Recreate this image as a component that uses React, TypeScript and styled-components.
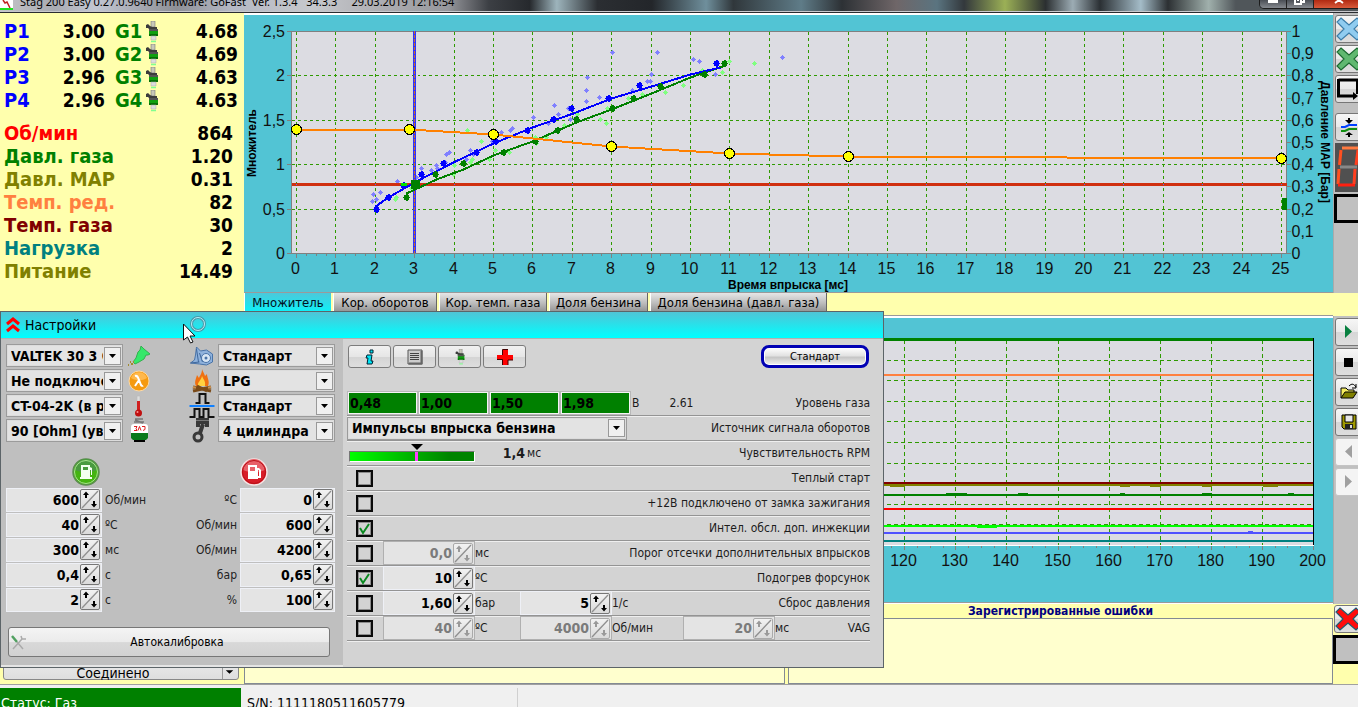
import React, { useLayoutEffect, useRef, useState } from "react";
import styled, { createGlobalStyle, css } from "styled-components";

const UI = `"DejaVu Sans Condensed", "DejaVu Sans", "Noto Sans", sans-serif`;
const ARIAL = `"Liberation Sans", Arial, sans-serif`;

const Global = createGlobalStyle`
  * { box-sizing: border-box; }
  body { margin: 0; background: #ffffad; font-family: ${UI}; font-size: 12px; color: #000; }
  button, input, select { font-family: inherit; margin: 0; }
`;

/* ---------- page frame ---------- */

const Page = styled.div`
  position: relative;
  display: flex;
  flex-direction: column;
  height: 100vh;
  overflow: hidden;
  background: #ffffad;
`;

const TitleBar = styled.header`
  display: flex;
  align-items: flex-start;
  height: 13px;
  flex: none;
  overflow: hidden;
  border-bottom: 1px solid #2a2c30;
  box-shadow: inset 0 -1px #c8c8cc;
  background: linear-gradient(90deg, #c4c4c8 0, #a9abb2 4%, #c2c6d2 7%, #8e9096 13%, #b4b8c4 17%, #c6c8cc 23%, #a9a9ae 29%, #96979c 33%, #3c3f44 36%, #26292d 39%, #9db4bc 41%, #2b2e32 44%, #23262a 48%, #6f8f9c 52%, #30373b 54%, #5f7c88 59%, #2d3135 62%, #6f6668 66%, #5a7480 69%, #33383c 71%, #9bb056 74%, #2b2f31 77%, #9cacb4 79%, #2b3034 81%, #a4bcc8 84%, #2c3033 86%, #a0b0ac 89%, #50565a 91%);
`;

const AppIcon = styled.svg`
  flex: none;
`;

const TitleText = styled.h1`
  margin: -6px 0 0 5px;
  font: 400 11px/16px "Noto Sans", sans-serif;
  white-space: pre;
`;

const WindowButtons = styled.div`
  display: flex;
  margin-left: auto;
  margin-right: -8px;
  height: 9px;
  flex: none;
  border: 1px solid #1c1c1c;
  border-top: 0;
  border-radius: 0 0 5px 5px;
  overflow: hidden;
`;

const WindowButton = styled.button<{ $close?: boolean }>`
  width: ${(p) => (p.$close ? 51 : 27)}px;
  padding: 0;
  border: 0;
  border-right: 1px solid #222;
  display: flex;
  justify-content: center;
  background: ${(p) => (p.$close ? "linear-gradient(#b12a12, #d8593a)" : "linear-gradient(#4a4e55, #85898f)")};
`;

const Main = styled.main`
  display: grid;
  grid-template-columns: 244px minmax(0, 1fr) 25px;
  grid-template-rows: 591px 80px;
  flex: none;
`;

const Readings = styled.section`
  padding: 7px 6px 0 4px;
`;

const Center = styled.section`
  display: flex;
  flex-direction: column;
`;

const ChartPanel = styled.div<{ $second?: boolean }>`
  border-top: 2px solid #fff;
  border-bottom: 1px solid #9a9a9a;
  background: #52c4d4;
  height: ${(p) => (p.$second ? 287 : 280)}px;
  flex: none;
  ${(p) => p.$second && css`box-shadow: 0 -1px #999, 0 1px #fff;`}
`;

const ChartSvg = styled.svg`
  display: block;
  width: 100%;
  font-family: ${ARIAL};
  shape-rendering: crispEdges;
`;

/* ---------- readings ---------- */

const ReadTable = styled.table<{ $gap?: boolean }>`
  width: 100%;
  border-collapse: collapse;
  margin-top: ${(p) => (p.$gap ? 10 : 0)}px;
  font: 700 20px/23px ${UI};
  td, th { padding: 0; height: 23px; }
`;

const Name = styled.th<{ $c: string; $w?: number; $start?: number }>`
  color: ${(p) => p.$c};
  text-align: left;
  font-weight: 700;
  ${(p) => p.$w && css`width: ${p.$w}px;`}
  && { padding-left: ${(p) => p.$start ?? 0}px; }
`;

const Value = styled.td<{ $w?: number; $end?: number }>`
  text-align: right;
  font-size: 19px;
  ${(p) => p.$w && css`width: ${p.$w}px;`}
  && { padding-right: ${(p) => p.$end ?? 0}px; }
`;

const IconCell = styled.td`
  width: 18px;
  svg { display: block; }
`;

/* ---------- tabs ---------- */

const Tabs = styled.div`
  display: flex;
  gap: 2px;
  height: 18px;
  margin-bottom: 5px;
  flex: none;
`;

const Tab = styled.button<{ $active?: boolean; $w: number }>`
  width: ${(p) => p.$w}px;
  height: 20px;
  padding: 0;
  border: 0;
  border-right: ${(p) => (p.$active ? "0" : "1px solid #666")};
  border-left: 1px solid #fff;
  color: ${(p) => (p.$active ? "#012" : "#000")};
  font: 13px/20px ${UI};
  white-space: nowrap;
  background: ${(p) => (p.$active ? "linear-gradient(#4cc8da, #08f4fa)" : "linear-gradient(#e6e6e6, #bdbdbd 50%, #8c8c8c)")};
`;

/* ---------- side tools ---------- */

const Side = styled.aside`
  display: flex;
  flex-direction: column;
  justify-content: space-between;
  overflow: hidden;
`;

const ToolGroup = styled.div<{ $h: number }>`
  display: flex;
  flex-direction: column;
  gap: 2px;
  height: ${(p) => p.$h}px;
  flex: none;
  padding: 2px 0 0 1px;
  border-left: 1px solid #aaa;
  background: #c0c0c0;
`;

const ErrorTools = styled.div`
  display: flex;
  flex-direction: column;
  gap: 2px;
  padding: 1px 0 0 1px;
`;

const ToolButton = styled.button<{ $off?: boolean; $gap?: boolean }>`
  display: flex;
  align-items: center;
  width: 28px;
  height: 28px;
  flex: none;
  margin-top: ${(p) => (p.$gap ? 8 : 0)}px;
  padding: 0;
  border: 1px solid ${(p) => (p.$off ? "#c4c4c4" : "#777")};
  border-radius: 3px;
  background: ${(p) => (p.$off ? "#f4f4f4" : "linear-gradient(#f6f6f6, #e9e9e9 50%, #d6d6d6 51%, #dedede)")};
  svg { display: block; flex: none; }
`;

const Segment = styled.svg`
  flex: none;
  display: block;
`;

const BlackBox = styled.div`
  width: 30px;
  height: 29px;
  margin-left: -1px;
  flex: none;
  border: 3px solid #000;
  background: #c0c0c0;
`;

/* ---------- bottom strip ---------- */

const Bottom = styled.div`
  display: grid;
  grid-template-columns: minmax(0, 541fr) minmax(0, 545fr);
  gap: 3px;
  grid-column: 2;
`;

const ErrorBlock = styled.section`
  display: flex;
  flex-direction: column;
`;

const ErrorTitle = styled.h2`
  margin: 0;
  height: 14px;
  font: 700 12px/15px ${UI};
  text-align: center;
  color: #000080;
`;

const ErrorBox = styled.div`
  flex: 1;
  border: 1px solid #838a93;
  background: #ffffce;
`;

const ConnectWrap = styled.div`
  display: flex;
  align-items: flex-end;
  padding: 0 5px 4px 3px;
`;

const Connect = styled.button`
  display: flex;
  align-items: flex-end;
  width: 100%;
  height: 26px;
  padding: 0 2px 0 0;
  border: 1px solid #888;
  border-radius: 3px;
  background: linear-gradient(#eee, #dedede);
  font: 14px/12px ${UI};
  span { flex: 1; }
  svg { border-left: 1px solid #999; }
`;

const StatusBar = styled.footer`
  display: flex;
  flex: 1;
  min-height: 23px;
  overflow: hidden;
  border-top: 1px solid #a0a0a0;
  background: #f0f0f0;
  font: 14px/18px ${UI};
`;

const StatusCell = styled.div<{ $green?: boolean }>`
  width: ${(p) => (p.$green ? 241 : 277)}px;
  flex: none;
  margin-top: 3px;
  padding: ${(p) => (p.$green ? "6px 0 0 1px" : "6px 0 0 6px")};
  white-space: nowrap;
  color: ${(p) => (p.$green ? "#fff" : "#000")};
  background: ${(p) => (p.$green ? "#008000" : "transparent")};
  border-right: ${(p) => (p.$green ? "0" : "1px solid #d0d0d0")};
`;

/* ---------- settings window ---------- */

const Dialog = styled.section`
  position: absolute;
  left: 0;
  top: 311px;
  width: 884px;
  border: 1px solid #5c6468;
  background: #d3d3d3;
`;

const DialogTitle = styled.h2`
  display: flex;
  align-items: center;
  gap: 5px;
  height: 27px;
  margin: 0;
  padding-left: 5px;
  font: 400 14px/18px ${UI};
  border-bottom: 1px solid #b0b0b0;
  background: linear-gradient(#50c4d6, #00ffff);
`;

const Body = styled.div`
  display: flex;
`;

const LeftPane = styled.div`
  width: 342px;
  flex: none;
  padding: 5px 8px 8px 5px;
  background: #bfbfbf;
  border-bottom: 2px solid #e4e4e4;
`;

const Cols = styled.div`
  display: flex;
  justify-content: space-between;
`;

const Stack = styled.div`
  display: flex;
  flex-direction: column;
  gap: 2px;
`;

const ComboRow = styled.div`
  display: flex;
  gap: 3px;
  align-items: center;
  height: 23px;
  > svg { flex: none; width: 26px; overflow: visible; }
`;

const ComboWrap = styled.span<{ $w: number }>`
  display: grid;
  width: ${(p) => p.$w}px;
  height: 23px;
  border: 1px solid #9b9b9b;
  outline: 1px solid #dcdcdc;
  outline-offset: -2px;
  background: #e3e3e3;
`;

const Select = styled.select`
  grid-area: 1 / 1;
  appearance: none;
  width: 100%;
  min-width: 0;
  padding: 0 19px 0 4px;
  border: 0;
  background: transparent;
  color: #000;
  font: 700 14px/18px ${UI};
  overflow: hidden;
`;

const ArrowBox = styled.span`
  grid-area: 1 / 1;
  justify-self: end;
  align-self: center;
  display: flex;
  align-items: center;
  justify-content: center;
  width: 17px;
  height: 18px;
  margin-right: 1px;
  border: 1px solid #999;
  background: #f0f0f0;
  pointer-events: none;
`;

const Pumps = styled.div`
  display: flex;
  justify-content: space-between;
  padding: 16px 67px 2px 66px;
  svg { display: block; }
`;

const FieldRow = styled.label<{ $rev?: boolean }>`
  display: flex;
  flex-direction: ${(p) => (p.$rev ? "row-reverse" : "row")};
  align-items: center;
  gap: 3px;
  height: 23px;
  font-size: 12px;
  color: #222;
`;

const SpinWrap = styled.span<{ $w: number; $off?: boolean }>`
  display: flex;
  align-items: center;
  width: ${(p) => p.$w}px;
  height: 24px;
  flex: none;
  border: 1px solid ${(p) => (p.$off ? "#b0b0b0" : "#eef0f6")};
  background: #e4e4e4;
`;

const SpinInput = styled.input`
  flex: 1;
  min-width: 0;
  width: 0;
  height: 20px;
  padding: 0 1px 0 0;
  border: 0;
  background: transparent;
  text-align: right;
  color: #000;
  font: 700 14px/20px ${UI};
  &:disabled { color: #7b7b7b; }
`;

const SpinButton = styled.button`
  width: 20px;
  height: 21px;
  flex: none;
  margin-right: 1px;
  padding: 0;
  border: 1px solid #777;
  border-radius: 2px;
  background: linear-gradient(#f2f2f2, #dadada);
  color: #000;
  svg { display: block; }
  &:disabled { border-color: #aaa; color: #999; }
`;

const Calibrate = styled.button`
  display: flex;
  align-items: center;
  width: 322px;
  height: 30px;
  margin: 16px 0 0 2px;
  padding: 0 2px;
  border: 1px solid #777;
  border-radius: 3px;
  background: linear-gradient(#f4f4f4, #ebebeb 50%, #d8d8d8 52%, #d2d2d2);
  font: 12px/16px ${UI};
  span { flex: 1; }
`;

const RightPane = styled.div`
  flex: 1;
  min-width: 0;
  padding: 6px 13px 0 4px;
`;

const TopRow = styled.div`
  display: flex;
  gap: 2px;
  padding-left: 1px;
  margin-bottom: 23px;
`;

const SmallButton = styled.button`
  display: flex;
  align-items: center;
  justify-content: center;
  width: 43px;
  height: 23px;
  padding: 0;
  border: 1px solid #7c7c7c;
  border-radius: 3px;
  background: linear-gradient(#f1f1f1, #e6e6e6 50%, #d4d4d4 51%, #dedede);
`;

const Standard = styled.button`
  width: 108px;
  height: 23px;
  margin-left: auto;
  margin-right: 1px;
  padding: 0;
  border: 3px solid #0000b4;
  border-radius: 8px;
  box-shadow: inset 0 0 0 1px #fff;
  background: linear-gradient(#fff, #e2e2e2 45%, #c6c6c6 55%, #f2f2f2);
  font: 11px/14px ${UI};
`;

const OptRow = styled.div`
  display: flex;
  align-items: center;
  height: 25px;
  border-bottom: 1px solid #949494;
  box-shadow: 0 1px #efefef;
  color: #1c1c1c;
`;

const Caption = styled.label`
  margin-left: auto;
  font: 12px/16px ${UI};
  white-space: nowrap;
`;

const Plain = styled.span<{ $l: number }>`
  padding-left: ${(p) => p.$l}px;
  font: 12px/16px ${UI};
`;

const Level = styled.input`
  width: 69px;
  height: 22px;
  margin-right: 2px;
  padding: 0 1px;
  border: 1px solid #f4f4f4;
  outline: 1px solid #b8b8b8;
  background: #008000;
  color: #000;
  font: 700 14px/18px ${UI};
`;

const SliderBox = styled.div`
  display: flex;
  flex-direction: column;
  width: 128px;
  padding-left: 2px;
  svg { display: block; }
`;

const Slider = styled.input`
  appearance: none;
  width: 126px;
  height: 11px;
  border: 1px solid #777;
  border-right-color: #fff;
  border-bottom-color: #fff;
  background: linear-gradient(90deg, #00ff00, #00c000 40%, #008400 80%);
  &::-webkit-slider-thumb { appearance: none; width: 3px; height: 9px; background: #ff40ff; }
`;

const SliderValue = styled.b`
  width: 50px;
  text-align: right;
  font: 700 14px/18px ${UI};
`;

const CheckCell = styled.span`
  display: grid;
  width: 36px;
  flex: none;
  padding-left: 9px;
  svg { grid-area: 1 / 1; pointer-events: none; }
`;

const Check = styled.input`
  grid-area: 1 / 1;
  appearance: none;
  width: 17px;
  height: 17px;
  border: 2px solid #0a0a0a;
  outline: 1px solid #8d8d8d;
  outline-offset: -3px;
`;

const Group = styled.label<{ $unit: number }>`
  display: grid;
  grid-template-columns: 92px ${(p) => p.$unit}px;
  align-items: center;
  white-space: nowrap;
  font: 12px/16px ${UI};
`;

const Pointer = styled.svg`
  position: absolute;
  left: 182px;
  top: 316px;
`;

/* ---------- data ---------- */

type P = [number, number];

const orange: P[] = [[0, 1.4], [2.87, 1.4], [5, 1.34], [8, 1.205], [11, 1.126], [14, 1.092], [25, 1.07]];
const blueLine: P[] = [[2, 0.53], [2.33, 0.63], [3, 0.8], [3.98, 1.03], [5, 1.24], [6, 1.42], [7.03, 1.58], [8, 1.74], [9, 1.885], [10, 2.02], [10.75, 2.1]];
const greenLine: P[] = [[2.8, 0.68], [3.56, 0.83], [4.24, 0.95], [5, 1.1], [6, 1.265], [7.11, 1.48], [8, 1.625], [9, 1.8], [10, 1.98], [10.9, 2.12]];
const blueDots: P[] = [[2.03, 0.5], [2.33, 0.63], [2.72, 0.77], [3.16, 0.89], [3.74, 1.01], [4.56, 1.14], [5.05, 1.26], [5.86, 1.39], [6.52, 1.51], [6.98, 1.63], [7.92, 1.75], [8.71, 1.89], [10.66, 2.14]];
const greenDots: P[] = [[2.79, 0.63], [3.54, 0.89], [4.24, 1.01], [5.25, 1.14], [6.07, 1.26], [6.62, 1.39], [7.11, 1.51], [8.01, 1.63], [8.56, 1.75], [9.25, 1.88], [10.36, 2.02], [10.87, 2.14]];
const blueCloud: P[] = [[1.93, 0.59], [1.95, 0.66], [2.13, 0.69], [2.03, 0.61], [2.57, 0.81], [3.05, 0.86], [3.17, 0.96], [3.43, 0.93], [3.55, 0.99], [3.57, 0.96], [3.81, 1.11], [3.88, 1.14], [3.78, 1.03], [4.31, 1.06], [4.42, 1.16], [4.49, 1.11], [4.97, 1.26], [5.2, 1.36], [5.43, 1.385], [5.48, 1.41], [6.02, 1.53], [6.4, 1.46], [6.55, 1.67], [6.65, 1.565], [6.95, 1.51], [6.9, 1.63], [7.08, 1.52], [7.36, 1.71], [7.36, 1.835], [7.39, 1.98], [7.69, 1.755], [8.02, 2.26], [8.53, 1.835], [8.9, 1.94], [8.99, 1.94], [9.01, 2.02], [9.17, 2.26], [10.08, 2.185], [10.23, 2.16], [10.64, 2.02], [12.34, 2.21]];
const greenCloud: P[] = [[2.52, 0.61], [2.55, 0.63], [2.91, 0.73], [4.01, 0.99], [3.99, 0.89], [4.34, 1.385], [4.47, 1.06], [4.42, 1.02], [4.7, 1.26], [4.9, 1.06], [5.06, 1.16], [5.41, 1.14], [6.1, 1.24], [6.07, 1.31], [6.35, 1.31], [6.8, 1.44], [7.13, 1.565], [7.72, 1.51], [7.87, 1.46], [7.89, 1.63], [8.43, 1.75], [8.79, 1.79], [9.37, 1.81], [9.83, 1.89], [10.31, 2.06], [10.82, 2.04], [10.99, 2.16], [11.63, 2.14]];

const range = (n: number) => Array.from({ length: n }, (_, i) => i);
const comma = (n: number) => String(n).replace(".", ",");

function useWidth(initial: number) {
  const ref = useRef<HTMLDivElement>(null);
  const [width, setWidth] = useState(initial);
  useLayoutEffect(() => {
    const el = ref.current;
    if (!el) return;
    const read = () => setWidth(el.clientWidth);
    read();
    const ro = new ResizeObserver(read);
    ro.observe(el);
    return () => ro.disconnect();
  }, []);
  return [ref, width] as const;
}

function MultiplierChart() {
  const [ref, w] = useWidth(1089);
  const left = 47.5;
  const right = w - 46.5;
  const step = (w - 104) / 25;
  const X = (v: number) => Math.round(52 + v * step) + 0.5;
  const Y = (v: number) => Math.round(238 - v * 88.8) + 0.5;
  const path = (ps: P[]) => ps.map(([a, b]) => `${X(a)},${Y(b)}`).join(" ");
  const diamond = ([a, b]: P) => `M${X(a) - 0.5} ${Y(b) - 2.5}h1v1h1v1h1v1h-1v1h-1v1h-1v-1h-1v-1h-1v-1h1v-1h1z`;
  const blob = ([a, b]: P) => `M${X(a) - 2.5} ${Y(b) - 2.5}h2v-1h2v1h1v2h1v1h-1v2h-1v1h-2v-1h-2v-2h-1v-1h1z`;
  return (
    <ChartPanel ref={ref}>
      <ChartSvg height={277} role="img" aria-label="Множитель">
        <rect x={left} y={16.5} width={right - left} height={222} fill="#dcdce2" stroke="#808080" />
        <g stroke="#2e9a00" strokeDasharray="3 3">
          {range(26).map((i) => <line key={i} x1={X(i)} x2={X(i)} y1={17} y2={238} />)}
          {[0.5, 1, 1.5, 2].map((v) => <line key={v} x1={left} x2={right} y1={Y(v)} y2={Y(v)} />)}
        </g>
        <g stroke="#808080">
          {range(101).map((i) => <line key={i} x1={X(i / 4)} x2={X(i / 4)} y1={239} y2={i % 4 ? 241 : 243} />)}
          {range(6).map((i) => <line key={i} x1={43} x2={47} y1={Y(i / 2)} y2={Y(i / 2)} />)}
          {range(11).map((i) => <line key={i} x1={right} x2={right + 4} y1={Y(i / 4)} y2={Y(i / 4)} />)}
        </g>
        <path d={blueCloud.map(diamond).join("")} fill="#8080ff" />
        <path d={greenCloud.map(diamond).join("")} fill="#80ff80" />
        <line x1={X(3)} x2={X(3)} y1={16} y2={238} stroke="#3030ff" strokeWidth={3} />
        <line x1={X(3)} x2={X(3)} y1={16} y2={238} stroke="#d07020" strokeDasharray="3 1" />
        <line x1={left} x2={right} y1={169.5} y2={169.5} stroke="#d03010" strokeWidth={3} />
        {range(26).map((i) => <rect key={i} x={X(i) - 0.5} y={169} width={1} height={1} fill="#4080ff" />)}
        <polyline points={path(greenLine)} fill="none" stroke="#008000" strokeWidth={2} />
        <polyline points={path(blueLine)} fill="none" stroke="#0000ff" strokeWidth={2} />
        <path d={blueDots.map(blob).join("")} fill="#0000ff" />
        <path d={greenDots.map(blob).join("")} fill="#008000" />
        <rect x={X(2.72) - 3} y={168} width={6} height={3} fill="#00e000" />
        <rect x={X(3) - 4} y={165} width={9} height={9} fill="#008000" />
        <rect x={right - 5} y={183} width={5} height={12} fill="#008000" />
        <polyline points={path(orange)} fill="none" stroke="#ff8000" strokeWidth={2} />
        {orange.map(([a, b]) => <circle key={a} cx={X(a)} cy={Y(b)} r={5} fill="#ffff00" stroke="#000" />)}
        <g fontSize={16} fill="#111">
          {range(6).map((i) => <text key={i} x={41} y={Y(i / 2) + 5} textAnchor="end">{comma(i / 2)}</text>)}
          {range(11).map((i) => <text key={i} x={right + 5} y={Y(i / 4) + 5}>{comma(i / 10)}</text>)}
          {range(26).map((i) => <text key={i} x={X(i) - 1} y={259} textAnchor="middle">{i}</text>)}
        </g>
        <g fontSize={12} fontWeight={700} textAnchor="middle">
          <text x={(left + right) / 2 - 1} y={274}>Время впрыска [мс]</text>
          <text transform="translate(12 128) rotate(-90)">Множитель</text>
          <text transform={`translate(${w - 12} 127) rotate(90)`}>Давление МАР [Бар]</text>
        </g>
      </ChartSvg>
    </ChartPanel>
  );
}

/* The settings window covers the older part of the trace, so only the tail is labelled. */
const FIRST_LABEL = 12;

function HistoryChart() {
  const [ref, w] = useWidth(1089);
  const left = 47.5;
  const right = w - 19.5;
  const X = (v: number) => Math.round(left + (v * (right - left)) / 200 - 0.5) + 0.5;
  const lines: [number, string][] = [
    [57, "#ff8040"], [165, "#800000"], [167, "#808000"], [177, "#008000"],
    [191, "#ff0000"], [208, "#00ff00"], [215, "#5050ff"], [223, "#008080"],
  ];
  return (
    <ChartPanel ref={ref} $second>
      <ChartSvg height={284} role="img" aria-label="Осциллограмма">
        <rect x={left} y={21} width={right - left} height={206} fill="#dcdce2" />
        <g stroke="#2e9a00" strokeDasharray="4 3">
          {range(19).map((i) => <line key={i} x1={X((i + 1) * 10)} x2={X((i + 1) * 10)} y1={22} y2={227} />)}
          {range(9).map((i) => {
            const y = Math.round(21 + (i + 1) * 20.6) + 0.5;
            return <line key={i} x1={left} x2={right} y1={y} y2={y} />;
          })}
        </g>
        {lines.map(([y, c]) => <line key={y} x1={left} x2={right} y1={y} y2={y} stroke={c} strokeWidth={2} />)}
        {[[117, 120], [162, 164], [168, 170], [178, 180], [190, 193]].map(([a, b]) => (
          <line key={a} x1={X(a)} x2={X(b)} y1={168} y2={168} stroke="#808000" strokeWidth={2} />
        ))}
        {[[128, 132], [142, 144], [162, 163], [178, 180], [195, 196]].map(([a, b]) => (
          <line key={a} x1={X(a)} x2={X(b)} y1={176} y2={176} stroke="#008000" strokeWidth={2} />
        ))}
        <line x1={X(134)} x2={X(138)} y1={209} y2={209} stroke="#00ff00" strokeWidth={2} />
        <line x1={X(187)} x2={X(188)} y1={214} y2={214} stroke="#5050ff" strokeWidth={2} />
        <line x1={left} x2={right} y1={21.5} y2={21.5} stroke="#008000" strokeWidth={3} />
        <line x1={right} x2={right} y1={20} y2={228} stroke="#000" />
        <line x1={left} x2={right} y1={227.5} y2={227.5} stroke="#fff" />
        <g stroke="#808080">
          {range(81).map((i) => <line key={i} x1={X(i * 2.5)} x2={X(i * 2.5)} y1={228} y2={i % 4 ? 230 : 232} />)}
        </g>
        <g fontSize={16} fill="#111" textAnchor="middle">
          {range(21).slice(FIRST_LABEL).map((i) => <text key={i} x={X(i * 10) - 1} y={248}>{i * 10}</text>)}
        </g>
      </ChartSvg>
    </ChartPanel>
  );
}

/* ---------- icons ---------- */

const Injector = ({ h = 22 }: { h?: number }) => (
  <svg width={12} height={h} viewBox="0 0 12 22" aria-hidden="true">
    <path d="M5 0h4v6h-4z" fill="#c8c8b8" stroke="#777" strokeWidth=".6" />
    <path d="M0 4l2-1 2 2 2 1h5v3H4L2 7 0 7z" fill="#3c3c3c" />
    <path d="M3 8h9v7H3z" fill="#10a010" />
    <path d="M3 8h9v2H3z" fill="#555" />
    <path d="M3 13h9v2H3z" fill="#077007" />
    <path d="M5 15h5v4H5z" fill="#ddd" stroke="#aaa" strokeWidth=".5" />
    <path d="M5 20.500h5" stroke="#80ff90" strokeWidth="1.500" />
  </svg>
);

const Cross = ({ fill, edge }: { fill: string; edge: string }) => (
  <svg width={26} height={26} viewBox="0 0 26 26" aria-hidden="true">
    <path d="M5 2l8 7 8-7 4 4-7 7 7 7-4 4-8-7-8 7-4-4 7-7-7-7z" fill={fill} stroke={edge} strokeWidth="1.200" />
  </svg>
);

const Caret = () => (
  <svg width={7} height={4} viewBox="0 0 7 4" aria-hidden="true"><path d="M0 0h7L3.500 4z" fill="#000" /></svg>
);

const SpinGlyph = () => (
  <svg width={18} height={19} viewBox="0 0 18 19" aria-hidden="true">
    <path d="M1 18L17 1" stroke="#8f8f8f" strokeWidth="1.300" />
    <path d="M5 8V4M13 11v5" stroke="currentColor" strokeWidth="2" />
    <path d="M2 5l3-3.500L8 5zM10 14l3 3.500 3-3.500z" fill="currentColor" />
  </svg>
);

const GreenNozzle = () => (
  <svg height={22} viewBox="0 0 24 22" aria-hidden="true">
    <path d="M14 1l3 3 6 5-2 1-2 0-2 4-5 3-4 2-2-2 3-4 2-6 2-2z" fill="#35e86a" stroke="#35b050" />
    <path d="M1 20h1M4 19h2M3 17h1M6 17h1" stroke="#a08a30" strokeWidth="2" />
  </svg>
);

const Lambda = () => (
  <svg height={22} viewBox="0 0 22 22" aria-hidden="true">
    <circle cx="11" cy="11" r="10" fill="#f59a10" stroke="#ffd9a0" />
    <path d="M3 8a8.500 8.500 0 0 1 16 0c-5 3-11 3-16 0z" fill="#ffb84c" />
    <path d="M7 6c3-1 3 2 4 4l2 5c.5 1 1.500 1 2 .5M11 10l-4 6" fill="none" stroke="#fff" strokeWidth="2" />
  </svg>
);

const Thermo = () => (
  <svg height={22} viewBox="0 0 20 22" aria-hidden="true">
    <path d="M8 1h3v6H8z" fill="#ddd" stroke="#bbb" strokeWidth=".6" />
    <path d="M8 6h3v11H8z" fill="#d02020" />
    <circle cx="9.500" cy="18" r="3.500" fill="#c01010" />
    <circle cx="8.500" cy="17" r="1" fill="#ff9090" />
  </svg>
);

const Tank = () => (
  <svg height={25} viewBox="0 0 22 25" aria-hidden="true">
    <path d="M7 1h8M6 4h10M7 2l8 3" stroke="#777" strokeWidth="1.500" />
    <rect x="3" y="6" width="17" height="14" rx="3" fill="#fff" />
    <path d="M3 15h17v5l-2 2H5l-2-2z" fill="#0a7a1a" />
    <path d="M6 8.500h3l-1 2 1 2H6M10 12.500l1.500-4 1.500 4M14 8.500h3v3l-2 1" fill="none" stroke="#e02020" />
    <path d="M6 22h11v2H6z" fill="#000" />
  </svg>
);

const Turbo = () => (
  <svg height={20} viewBox="0 0 25 20" aria-hidden="true">
    <path d="M7 1l4 4 6-1 6 4v8l-6 3-7-1-9-1 4-3 1-5z" fill="#8fb2dc" stroke="#4a74a8" />
    <path d="M1 17l9-1M7 3l2 13M10 7l3 9" stroke="#3f679b" fill="none" />
    <circle cx="16.500" cy="12" r="4.500" fill="#d8e6f4" stroke="#4a74a8" />
    <circle cx="16.500" cy="12" r="1.500" fill="#4a74a8" />
  </svg>
);

const Fire = () => (
  <svg height={24} viewBox="0 0 24 24" aria-hidden="true">
    <path d="M12 0c1 3 2 4 3 7l2-2c0 4 3 7 1 12H6c-2-4 0-7 1-11l2 3c1-3 3-4 3-9z" fill="#f07010" />
    <path d="M12 7c1 3 4 5 3 10H8c-1-4 3-5 4-10z" fill="#ffd040" />
    <path d="M3 18l18 4M21 18L3 22M7 17l10 5" stroke="#7a4a18" strokeWidth="3" />
    <path d="M3 18l3 .7M21 18l-3 .7" stroke="#c89050" strokeWidth="2" />
  </svg>
);

const Pulses = () => (
  <svg height={25} viewBox="0 0 25 25" aria-hidden="true">
    <path d="M6 10h4V1h6v9h4" fill="none" stroke="#111" strokeWidth="2" />
    <path d="M0 13h25" stroke="#1080ff" strokeWidth="2" />
    <path d="M0 24h5v-8h5v8h4v-8h5v8h6" fill="none" stroke="#111" strokeWidth="2" />
  </svg>
);

const Piston = () => (
  <svg height={25} viewBox="0 0 22 25" aria-hidden="true">
    <path d="M5 0h13v9h-4V6H9v3H5z" fill="#383838" />
    <path d="M5 2.500h13" stroke="#777" />
    <path d="M12 6l-3 9" stroke="#383838" strokeWidth="4" />
    <circle cx="7" cy="19" r="4" fill="none" stroke="#383838" strokeWidth="3" />
  </svg>
);

const Pump = ({ red }: { red?: boolean }) => (
  <svg width={28} height={28} viewBox="0 0 28 28" aria-hidden="true">
    <circle cx="14" cy="14" r="13" fill={red ? "#d81c28" : "#44b410"} stroke={red ? "#f6e4e4" : "#5c8c50"} strokeWidth="1.500" />
    <path d="M3 12a11 11 0 0 1 22 0c-7 3-15 3-22 0z" fill={red ? "#e86068" : "#4a9a40"} />
    <circle cx="14" cy="14" r="11.500" fill="none" stroke={red ? "#b81018" : "#a8e090"} />
    {red ? (
      <path d="M8 7h9v3h2l2 2v8h-3v1H8zM10 9v4h5V9zM18 12v6h1v-6z" fill="#fff" fillRule="evenodd" />
    ) : (
      <path d="M9 7h9v12h2v2H8v-2h1zM11 9v3h5V9zM18 9l2 1v7h-1v-5h-1z" fill="#f4fff0" fillRule="evenodd" />
    )}
  </svg>
);

const Tick = () => (
  <svg width={17} height={17} viewBox="0 0 17 17" aria-hidden="true">
    <path d="M4 8l3 5 6-9" fill="none" stroke="#0a8a20" strokeWidth="2" />
  </svg>
);

/* ---------- parts ---------- */

function Combo({ w = 117, label, value }: { w?: number; label: string; value: string }) {
  return (
    <ComboWrap $w={w}>
      <Select aria-label={label} defaultValue={value}><option>{value}</option></Select>
      <ArrowBox><Caret /></ArrowBox>
    </ComboWrap>
  );
}

function Spin({ w, value, off }: { w: number; value: string; off?: boolean }) {
  return (
    <SpinWrap $w={w} $off={off}>
      <SpinInput defaultValue={value} disabled={off} inputMode="decimal" />
      <SpinButton type="button" disabled={off} aria-label="Изменить значение"><SpinGlyph /></SpinButton>
    </SpinWrap>
  );
}

type Opt = { id: string; text: string; on?: boolean; fields?: { v: string; u: string; off?: boolean }[] };
const options: Opt[] = [
  { id: "warm", text: "Теплый старт" },
  { id: "key", text: "+12В подключено от замка зажигания" },
  { id: "extra", text: "Интел. обсл. доп. инжекции", on: true },
  { id: "cut", text: "Порог отсечки дополнительных впрысков", fields: [{ v: "0,0", u: "мс", off: true }] },
  { id: "heat", text: "Подогрев форсунок", on: true, fields: [{ v: "10", u: "ºC" }] },
  { id: "drop", text: "Сброс давления", fields: [{ v: "1,60", u: "бар" }, { v: "5", u: "1/с" }] },
  { id: "vag", text: "VAG", fields: [{ v: "40", u: "ºC", off: true }, { v: "4000", u: "Об/мин", off: true }, { v: "20", u: "мс", off: true }] },
];
const unitWidths = [45, 71, 30];

const cylinders = [["3.00", "4.68"], ["3.00", "4.69"], ["2.96", "4.63"], ["2.96", "4.63"]];
const sensors = [
  ["Об/мин", "864", "#ff0000"], ["Давл. газа", "1.20", "#008000"], ["Давл. МАР", "0.31", "#808000"],
  ["Темп. ред.", "82", "#ff8040"], ["Темп. газа", "30", "#800000"], ["Нагрузка", "2", "#008080"], ["Питание", "14.49", "#808000"],
];

function Settings() {
  return (
    <Dialog aria-label="Настройки">
      <DialogTitle>
        <svg width={14} height={16} viewBox="0 0 14 16" aria-hidden="true">
          <path d="M1 7l6-5 6 5M1 14l6-5 6 5" fill="none" stroke="#ff0000" strokeWidth="3" />
        </svg>
        Настройки
      </DialogTitle>
      <Body>
        <LeftPane>
          <Cols>
            <Stack>
              <ComboRow><Combo label="Форсунки" value="VALTEK 30 3 Ohm" /><GreenNozzle /></ComboRow>
              <ComboRow><Combo label="Лямбда-зонд" value="Не подключен" /><Lambda /></ComboRow>
              <ComboRow><Combo label="Датчик температуры" value="CT-04-2K (в редукторе)" /><Thermo /></ComboRow>
              <ComboRow><Combo label="Датчик уровня" value="90 [Ohm] (увеличение)" /><Tank /></ComboRow>
            </Stack>
            <Stack>
              <ComboRow><Turbo /><Combo label="Тип двигателя" value="Стандарт" /></ComboRow>
              <ComboRow><Fire /><Combo label="Тип топлива" value="LPG" /></ComboRow>
              <ComboRow><Pulses /><Combo label="Тип впрыска" value="Стандарт" /></ComboRow>
              <ComboRow><Piston /><Combo label="Число цилиндров" value="4 цилиндра" /></ComboRow>
            </Stack>
          </Cols>
          <Pumps><Pump /><Pump red /></Pumps>
          <Cols>
            <Stack>
              {[["600", "Об/мин"], ["40", "ºC"], ["300", "мс"], ["0,4", "с"], ["2", "с"]].map(([v, u], i) => (
                <FieldRow key={i}><Spin w={96} value={v} />{u}</FieldRow>
              ))}
            </Stack>
            <Stack>
              {[["0", "ºC"], ["600", "Об/мин"], ["4200", "Об/мин"], ["0,65", "бар"], ["100", "%"]].map(([v, u], i) => (
                <FieldRow key={i} $rev><Spin w={95} value={v} />{u}</FieldRow>
              ))}
            </Stack>
          </Cols>
          <Calibrate type="button">
            <svg width={16} height={16} viewBox="0 0 16 16" aria-hidden="true">
              <path d="M1 2l5 6" stroke="#50a060" strokeWidth="2.500" />
              <path d="M6 8l6 7M2 15l9-10M10 2l1 3 4 0" fill="none" stroke="#aaa" strokeWidth="1.500" />
            </svg>
            <span>Автокалибровка</span>
          </Calibrate>
        </LeftPane>
        <RightPane>
          <TopRow>
            <SmallButton type="button" aria-label="Информация">
              <svg width={10} height={16} viewBox="0 0 10 16" aria-hidden="true">
                <path d="M5 1h3v3H5zM2 6h5l-1 6h2l-1 3H2l1-6H1z" fill="#00e4f4" stroke="#023" />
              </svg>
            </SmallButton>
            <SmallButton type="button" aria-label="Параметры">
              <svg width={16} height={16} viewBox="0 0 16 16" aria-hidden="true">
                <path d="M1 1h14v14H1z" fill="#ccc" stroke="#555" />
                <path d="M3 4.500h9M3 6.500h9M3 8.500h9M3 10.500h9" stroke="#444" />
                <path d="M14.500 2v12.500H2" fill="none" stroke="#666" strokeWidth="2" />
              </svg>
            </SmallButton>
            <SmallButton type="button" aria-label="Форсунки"><Injector h={16} /></SmallButton>
            <SmallButton type="button" aria-label="Сервис">
              <svg width={16} height={16} viewBox="0 0 16 16" aria-hidden="true">
                <path d="M5 1h6v5h5v5h-5v5H5v-5H0V6h5z" fill="#ff0000" />
                <path d="M5.500 6V.5H11M0 10.500h5.500V16M11 16v-5h5" fill="none" stroke="#400" strokeWidth="1" />
              </svg>
            </SmallButton>
            <Standard type="button">Стандарт</Standard>
          </TopRow>
          <OptRow>
            <Plain $l={1} />
            {["0,48", "1,00", "1,50", "1,98"].map((v, i) => <Level key={v} id={`level-${i}`} aria-label={`Уровень ${i + 1}`} defaultValue={v} />)}
            <Plain $l={0}>В</Plain>
            <Plain $l={30}>2.61</Plain>
            <Caption htmlFor="level-0">Уровень газа</Caption>
          </OptRow>
          <OptRow>
            <Combo w={280} label="Источник сигнала оборотов" value="Импульсы впрыска бензина" />
            <Caption as="span">Источник сигнала оборотов</Caption>
          </OptRow>
          <OptRow>
            <SliderBox>
              <svg width={126} height={7} viewBox="0 0 126 7" aria-hidden="true"><path d="M62 0h12l-6 6z" fill="#000" /></svg>
              <Slider id="rpm" type="range" min={0} max={100} defaultValue={54} />
            </SliderBox>
            <SliderValue>1,4</SliderValue>
            <Plain $l={2}>мс</Plain>
            <Caption htmlFor="rpm">Чувствительность RPM</Caption>
          </OptRow>
          {options.map((o) => (
            <OptRow key={o.id}>
              <CheckCell>
                <Check type="checkbox" id={o.id} checked={!!o.on} readOnly />
                {o.on && <Tick />}
              </CheckCell>
              {o.fields?.map((f, i) => (
                <Group key={i} $unit={unitWidths[i]}><Spin w={92} value={f.v} off={f.off} />{f.u}</Group>
              ))}
              <Caption htmlFor={o.id}>{o.text}</Caption>
            </OptRow>
          ))}
        </RightPane>
      </Body>
    </Dialog>
  );
}

export default function App() {
  return (
    <Page>
      <Global />
      <TitleBar>
        <AppIcon width={15} height={12} viewBox="0 0 15 12" aria-hidden="true">
          <path d="M0 0h13v9H0z" fill="#fff" />
          <path d="M3 0l2 3 2-1 3 6" fill="none" stroke="#c02020" strokeWidth="1.500" />
          <path d="M0 8h13v2H0z" fill="#20e020" />
        </AppIcon>
        <TitleText>{"Stag 200 Easy 0.27.0.9640 Firmware: GoFast  Ver. 1.3.4   34.3.3     29.03.2019 12:16:54"}</TitleText>
        <WindowButtons>
          <WindowButton aria-label="Свернуть"><svg width={12} height={4}><rect x={1} width={10} height={3} fill="#fff" /></svg></WindowButton>
          <WindowButton aria-label="Развернуть"><svg width={12} height={5}><path d="M1 0v4h6V0M4 0v1M7 2h3V0" fill="none" stroke="#fff" strokeWidth={2} /></svg></WindowButton>
          <WindowButton $close aria-label="Закрыть"><svg width={12} height={4}><path d="M2 3l4-3 4 3" fill="none" stroke="#fff" strokeWidth={2} /></svg></WindowButton>
        </WindowButtons>
      </TitleBar>

      <Main>
        <Readings>
          <ReadTable>
            <tbody>
              {cylinders.map(([p, g], i) => (
                <tr key={i}>
                  <Name $c="#0000ff" $w={40}>P{i + 1}</Name>
                  <Value $w={61}>{p}</Value>
                  <Name $c="#008000" $w={41} $start={10}>G{i + 1}</Name>
                  <IconCell><Injector /></IconCell>
                  <Value>{g}</Value>
                </tr>
              ))}
            </tbody>
          </ReadTable>
          <ReadTable $gap>
            <tbody>
              {sensors.map(([n, v, c]) => (
                <tr key={n}><Name $c={c}>{n}</Name><Value $end={5}>{v}</Value></tr>
              ))}
            </tbody>
          </ReadTable>
        </Readings>

        <Center>
          <MultiplierChart />
          <Tabs role="tablist">
            <Tab role="tab" aria-selected $active $w={87}>Множитель</Tab>
            <Tab role="tab" $w={104}>Кор. оборотов</Tab>
            <Tab role="tab" $w={108}>Кор. темп. газа</Tab>
            <Tab role="tab" $w={99}>Доля бензина</Tab>
            <Tab role="tab" $w={177}>Доля бензина (давл. газа)</Tab>
          </Tabs>
          <HistoryChart />
        </Center>

        <Side>
          <ToolGroup $h={280}>
            <ToolButton aria-label="Очистить бензин"><Cross fill="#90ccf0" edge="#3a7ca8" /></ToolButton>
            <ToolButton aria-label="Очистить газ"><Cross fill="#60b870" edge="#1a6a30" /></ToolButton>
            <ToolButton aria-label="Область">
              <svg width={26} height={26} viewBox="0 0 26 26" aria-hidden="true">
                <path d="M2.500 4h19v14M2.500 3v17h17" fill="none" stroke="#000" strokeWidth="3" />
                <path d="M17 16l5 4-5 4z" fill="#000" />
              </svg>
            </ToolButton>
            <ToolButton $gap aria-label="Совместить">
              <svg width={26} height={26} viewBox="0 0 26 26" aria-hidden="true">
                <path d="M5 13h4l4-2h8" fill="none" stroke="#0040ff" strokeWidth="2" />
                <path d="M5 17h4l4-2h8" fill="none" stroke="#109010" strokeWidth="2" />
                <path d="M9 6h8l-4 4zM9 21h8l-4-3z" fill="#000" />
                <path d="M13 4v3M13 20v3" stroke="#000" strokeWidth="2" />
              </svg>
            </ToolButton>
            <Segment width={28} height={49} viewBox="0 0 28 49" aria-hidden="true">
              <rect width="28" height="49" fill="#505050" />
              <path d="M7 5h17" stroke="#ff7a40" strokeWidth="3" />
              <path d="M6 7L4.500 22M4 26L3 41" stroke="#ff5020" strokeWidth="3" />
              <path d="M5 24h17" stroke="#888" strokeWidth="3" />
              <path d="M3 42h17" stroke="#ff2010" strokeWidth="3" />
              <path d="M23 7l-2 15M20 26l-1 15" stroke="#ff4020" strokeWidth="3" />
            </Segment>
            <BlackBox />
          </ToolGroup>
          <ToolGroup $h={288}>
            <ToolButton aria-label="Пуск"><svg width={26} height={26}><path d="M9 6v13l7-6.500z" fill="#088040" /></svg></ToolButton>
            <ToolButton aria-label="Стоп"><svg width={26} height={26}><path d="M8 9h9v9H8z" fill="#000" /></svg></ToolButton>
            <ToolButton aria-label="Открыть">
              <svg width={26} height={26}>
                <path d="M5 19V9h5l2 2h6v3" fill="#f4ec60" stroke="#000" />
                <path d="M5 19l4-6h12l-4 6z" fill="#808000" stroke="#000" />
                <path d="M13 7c3-3 5-2 7 1M20 5v4h-4" fill="none" stroke="#000" />
              </svg>
            </ToolButton>
            <ToolButton aria-label="Сохранить">
              <svg width={26} height={26}>
                <path d="M6 6h14v14H8l-2-2z" fill="#a09a00" stroke="#000" />
                <path d="M9 6h8v7H9z" fill="#e8e8e8" stroke="#000" />
                <path d="M9 15h8v5H9z" fill="#222" /><path d="M14 16h2v3h-2z" fill="#ddd" />
              </svg>
            </ToolButton>
            <ToolButton $off aria-label="Назад"><svg width={26} height={26}><path d="M16 6v13l-7-6.500z" fill="#a0a0a0" /></svg></ToolButton>
            <ToolButton $off aria-label="Вперёд"><svg width={26} height={26}><path d="M9 6v13l7-6.500z" fill="#a0a0a0" /></svg></ToolButton>
          </ToolGroup>
        </Side>

        <ConnectWrap>
          <Connect type="button">
            <span>Соединено</span>
            <svg width={14} height={14} viewBox="0 0 14 14" aria-hidden="true"><path d="M3 5h8l-4 4z" fill="#000" /></svg>
          </Connect>
        </ConnectWrap>
        <Bottom>
          <ErrorBlock><ErrorTitle aria-hidden="true" /><ErrorBox /></ErrorBlock>
          <ErrorBlock><ErrorTitle>Зарегистрированные ошибки</ErrorTitle><ErrorBox /></ErrorBlock>
        </Bottom>
        <ErrorTools>
          <ToolButton aria-label="Удалить ошибки"><Cross fill="#ff0c0c" edge="#1c5c70" /></ToolButton>
          <BlackBox />
        </ErrorTools>
      </Main>

      <StatusBar>
        <StatusCell $green>Статус: Газ</StatusCell>
        <StatusCell>S/N: 1111180511605779</StatusCell>
      </StatusBar>

      <Settings />

      <Pointer width={26} height={28} viewBox="0 0 26 28" aria-hidden="true">
        <circle cx="16" cy="8" r="6.500" fill="none" stroke="#4a98a8" strokeWidth="3" />
        <circle cx="16" cy="8" r="6.500" fill="none" stroke="#b8f0f8" strokeWidth="1" />
        <path d="M1.500 8v16l4-3 3 6 2.500-1-3-6h5z" fill="#fff" stroke="#111" />
      </Pointer>
    </Page>
  );
}
